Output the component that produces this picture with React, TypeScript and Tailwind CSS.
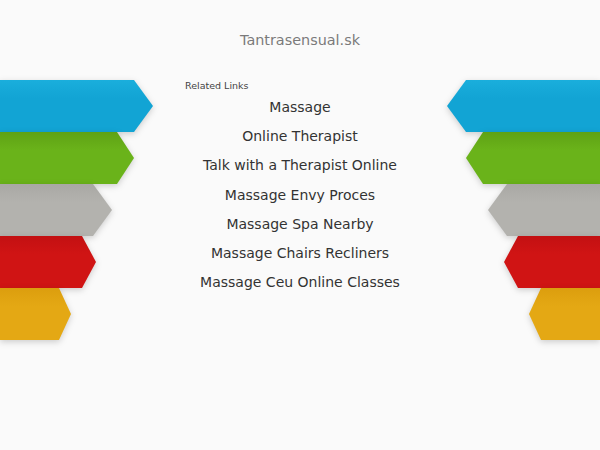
const arrows = [
  { body: 134, tip: 153, top: "#1aaedc", bottom: "#12a4d4" },
  { body: 117, tip: 134, top: "#5fa214", bottom: "#6ab31a" },
  { body: 93, tip: 112, top: "#a9a8a4", bottom: "#b3b2ae" },
  { body: 82, tip: 96, top: "#c31012", bottom: "#d01414" },
  { body: 59, tip: 71, top: "#dc9e0e", bottom: "#e4a814" },
];

const links = [
  "Massage",
  "Online Therapist",
  "Talk with a Therapist Online",
  "Massage Envy Proces",
  "Massage Spa Nearby",
  "Massage Chairs Recliners",
  "Massage Ceu Online Classes",
];

function Arrow({ body, tip, top, bottom, side, i }: { body: number; tip: number; top: string; bottom: string; side: "left" | "right"; i: number }) {
  const h = 52;
  const pts = side === "left"
    ? `0,0 ${body},0 ${tip},${h / 2} ${body},${h} 0,${h}`
    : `154,0 ${154 - body},0 ${154 - tip},${h / 2} ${154 - body},${h} 154,${h}`;
  const id = `g-${side}-${i}`;
  return (
    <svg width="154" height={h} viewBox={`0 0 154 ${h}`} className="block overflow-visible" style={{ filter: "drop-shadow(0 2px 3px rgba(0,0,0,0.18))" }}>
      <defs>
        <linearGradient id={id} x1="0" y1="0" x2="0" y2="1">
          <stop offset="0" stopColor={top} />
          <stop offset="0.35" stopColor={bottom} />
          <stop offset="1" stopColor={bottom} />
        </linearGradient>
      </defs>
      <polygon points={pts} fill={`url(#${id})`} />
    </svg>
  );
}

export default function App() {
  return (
    <div className="w-[600px] h-[450px] bg-[#fafafa] overflow-hidden" style={{ fontFamily: "'DejaVu Sans', sans-serif" }}>
      <div className="pt-[32px] h-[80px] text-center text-[14.4px] leading-[17px] text-[#7a7a7a]">Tantrasensual.sk</div>
      <div className="flex">
        <div className="w-[154px] flex flex-col">
          {arrows.map((a, i) => (
            <Arrow key={i} {...a} side="left" i={i} />
          ))}
        </div>
        <div className="flex-1 pl-[31px]">
          <div className="text-[9.5px] text-[#444] leading-[12px]">Related Links</div>
          <div className="flex flex-col items-center -ml-[31px] pt-[1px]">
            {links.map((l) => (
              <a key={l} className="text-[14px] leading-[29.2px] text-[#333]">{l}</a>
            ))}
          </div>
        </div>
        <div className="w-[154px] flex flex-col">
          {arrows.map((a, i) => (
            <Arrow key={i} {...a} side="right" i={i} />
          ))}
        </div>
      </div>
    </div>
  );
}
